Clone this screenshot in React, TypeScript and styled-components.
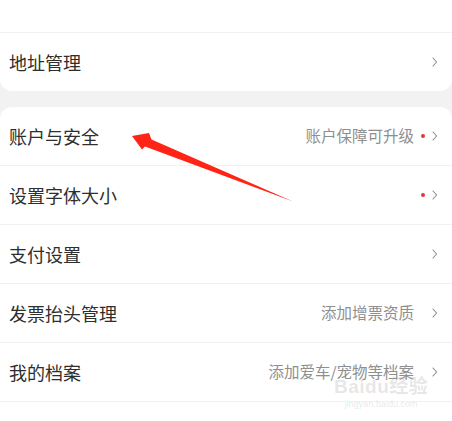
import React from "react";
import styled, { createGlobalStyle } from "styled-components";

const Global = createGlobalStyle`
  html, body { margin: 0; padding: 0; background: #f2f2f2; }
  body { font-family: "Noto Sans CJK SC", "Noto Sans", sans-serif; }
  #root { width: 452px; height: 421px; overflow: hidden; position: relative; }
`;

const Page = styled.div`
  display: flex;
  flex-direction: column;
  gap: 16px;
  width: 452px;
  height: 421px;
  background: #f2f2f2;
  position: relative;
  overflow: hidden;
`;

const Card = styled.div<{ $top?: boolean }>`
  background: #ffffff;
  border-radius: ${(p) => (p.$top ? "0 0 12px 12px" : "12px 12px 0 0")};
  display: flex;
  flex-direction: column;
  flex: ${(p) => (p.$top ? "0 0 auto" : "1 1 auto")};
`;

const Row = styled.div<{ $h?: number; $last?: boolean }>`
  height: ${(p) => p.$h ?? 58}px;
  box-sizing: border-box;
  display: flex;
  align-items: center;
  justify-content: space-between;
  padding: 0 14px 1px 9px;
  border-bottom: ${(p) => (p.$last ? "none" : "1px solid #f1f1f1")};
  flex-shrink: 0;
`;

const Title = styled.span`
  font-size: 18px;
  color: #2e2e2e;
  line-height: 1;
`;

const Right = styled.div`
  display: flex;
  align-items: center;
`;

const Sub = styled.span`
  font-size: 15.5px;
  color: #8f8f8f;
  line-height: 1;
`;

const Dot = styled.span<{ $on?: boolean }>`
  width: 4px;
  height: 4px;
  border-radius: 50%;
  margin: 0 7px 0 7px;
  background: ${(p) => (p.$on ? "#e0393a" : "transparent")};
`;

const Chevron = () => (
  <svg width="6" height="10" viewBox="0 0 6 10" style={{ display: "block" }}>
    <polyline points="1,1 4.6,5 1,9" fill="none" stroke="#8a8a8a" strokeWidth="1.1" strokeLinecap="round" strokeLinejoin="round" />
  </svg>
);

const ArrowLayer = styled.svg`
  position: absolute;
  left: 0;
  top: 0;
  pointer-events: none;
`;

const Watermark = styled.div`
  position: absolute;
  left: 334px;
  top: 379px;
  display: flex;
  flex-direction: column;
  align-items: center;
  color: rgba(160, 160, 160, 0.26);
  font-family: "Liberation Sans", "Noto Sans CJK SC", sans-serif;
  pointer-events: none;
`;

const WmMain = styled.div`
  font-size: 19px;
  font-weight: bold;
  line-height: 16px;
  letter-spacing: 0.5px;
`;

const WmSub = styled.div`
  font-size: 9px;
  line-height: 11px;
  margin-top: 4px;
`;

type Item = { title: string; sub?: string; dot?: boolean };

const items: Item[] = [
  { title: "账户与安全", sub: "账户保障可升级", dot: true },
  { title: "设置字体大小", dot: true },
  { title: "支付设置" },
  { title: "发票抬头管理", sub: "添加增票资质" },
  { title: "我的档案", sub: "添加爱车/宠物等档案" },
];

export default function App() {
  return (
    <>
      <Global />
      <Page>
        <Card $top>
          <Row $h={33} />
          <Row $last>
            <Title>地址管理</Title>
            <Right>
              <Chevron />
            </Right>
          </Row>
        </Card>
        <Card>
          {items.map((it) => (
            <Row key={it.title} $h={59}>
              <Title>{it.title}</Title>
              <Right>
                {it.sub && <Sub>{it.sub}</Sub>}
                <Dot $on={it.dot} />
                <Chevron />
              </Right>
            </Row>
          ))}
        </Card>
        <Watermark>
          <WmMain>Baidu经验</WmMain>
          <WmSub>jingyan.baidu.com</WmSub>
        </Watermark>
        <ArrowLayer width="452" height="421" viewBox="0 0 452 421">
          <polygon
            points="132,136 149,133 151.5,139.5 293,201.5 145,146.5 142,149.5"
            fill="#ff2416"
          />
        </ArrowLayer>
      </Page>
    </>
  );
}
